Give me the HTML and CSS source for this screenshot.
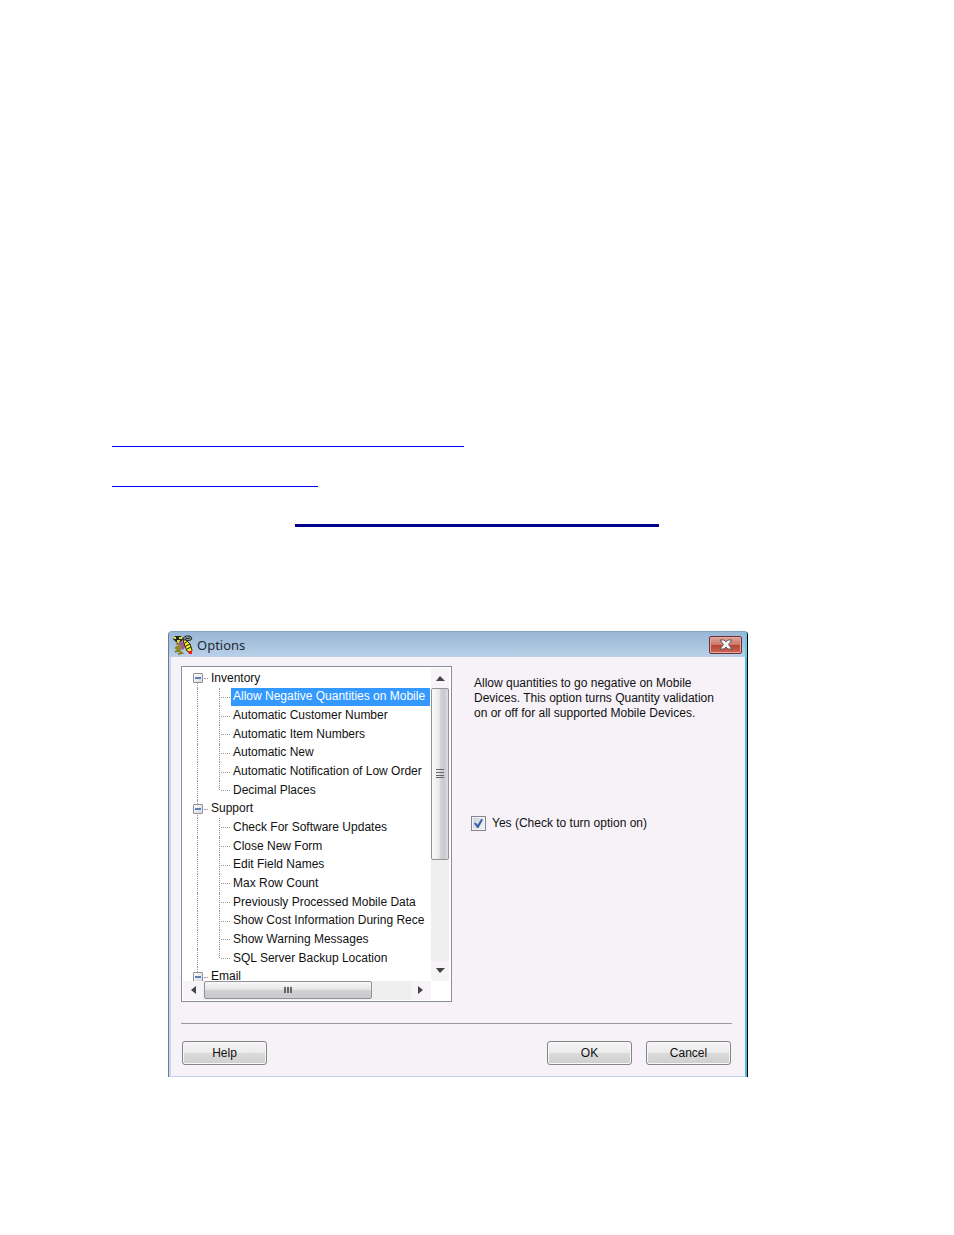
FILE: index.html
```html
<!DOCTYPE html>
<html lang="en">
<head>
<meta charset="utf-8">
<title>Options</title>
<link rel="stylesheet" href="styles.css">
</head>
<body>
<main class="page">
  <nav class="links" aria-label="Related topics">
    <a class="rule-link rule-link-long" href="#options" aria-label="Related topic 1"></a>
    <a class="rule-link rule-link-short" href="#options" aria-label="Related topic 2"></a>
  </nav>
  <hr class="section-rule">
  <section class="dialog" id="options" role="dialog" aria-labelledby="dialog-title">
    <header class="titlebar">
      <svg class="bee" viewBox="0 0 20 20" aria-hidden="true">
        <path d="M10 3l3-2h4l2 2-1 2-5 1-2 2z" fill="#8a9298" stroke="#2a2e2c"/>
        <path d="M12 4l5-1" stroke="#2a2e2c"/>
        <path d="M0 4l2-3h6l2 3-2 3H3z" fill="#23251a"/>
        <path d="M1 3h2M6 3h3M4 6h3" stroke="#e6e23a" stroke-width="2"/>
        <path d="M3 8l4 2-4 3 3 2-4 2M8 13l-2 3 3 2-4 1" stroke="#8b7f20" stroke-width="2"/>
        <path d="M6 6l5 1 2 4-3 4-4-3z" fill="#a55799"/>
        <path d="M5 10h3v4H5z" fill="#9a8c25"/>
        <path d="M10 5h3l4 4 2 6-1 3-4-2-2-5z" fill="#f5ed20" stroke="#27270d"/>
        <path d="M12 8l3-2M13 11l4-2M14 14l4-2" stroke="#20200e"/>
        <path d="M15 16h4v3h-3z" fill="#ef1826"/>
      </svg>
      <h1 class="title" id="dialog-title">Options</h1>
      <button class="close" type="button" aria-label="Close">
        <svg viewBox="0 0 14 11" aria-hidden="true"><path d="M1 1h4l2 2 2-2h4L9.500 5.500 13 10H9L7 8l-2 2H1l3.500-4.500z" fill="#f7f7f7" stroke="#65575b"/></svg>
      </button>
    </header>
    <div class="content">
      <div class="tree-box">
        <div class="tree-view">
          <ul class="tree" role="tree">
            <li class="group first" role="treeitem" aria-expanded="true"><span class="toggle"></span>Inventory</li>
            <li class="item" role="treeitem" aria-selected="true"><span class="label selected">Allow Negative Quantities on Mobile</span></li>
            <li class="item" role="treeitem"><span class="label">Automatic Customer Number</span></li>
            <li class="item" role="treeitem"><span class="label">Automatic Item Numbers</span></li>
            <li class="item" role="treeitem"><span class="label">Automatic New</span></li>
            <li class="item" role="treeitem"><span class="label">Automatic Notification of Low Order</span></li>
            <li class="item last" role="treeitem"><span class="label">Decimal Places</span></li>
            <li class="group" role="treeitem" aria-expanded="true"><span class="toggle"></span>Support</li>
            <li class="item" role="treeitem"><span class="label">Check For Software Updates</span></li>
            <li class="item" role="treeitem"><span class="label">Close New Form</span></li>
            <li class="item" role="treeitem"><span class="label">Edit Field Names</span></li>
            <li class="item" role="treeitem"><span class="label">Max Row Count</span></li>
            <li class="item" role="treeitem"><span class="label">Previously Processed Mobile Data</span></li>
            <li class="item" role="treeitem"><span class="label">Show Cost Information During Rece</span></li>
            <li class="item" role="treeitem"><span class="label">Show Warning Messages</span></li>
            <li class="item last" role="treeitem"><span class="label">SQL Server Backup Location</span></li>
            <li class="group" role="treeitem" aria-expanded="true"><span class="toggle"></span>Email</li>
          </ul>
        </div>
        <div class="scroll scroll-v">
          <button class="arrow" type="button" aria-label="Scroll up"><svg viewBox="0 0 9 9"><path d="M0 7l4-5 5 5z"/></svg></button>
          <div class="track"><div class="thumb"><svg viewBox="0 0 9 9"><path d="M0 0h8v1H0zM0 3h8v1H0zM0 6h8v1H0zM0 8h8v1H0z"/></svg></div></div>
          <button class="arrow" type="button" aria-label="Scroll down"><svg viewBox="0 0 9 9"><path d="M0 1h9L4 6z"/></svg></button>
        </div>
        <div class="scroll scroll-h">
          <button class="arrow" type="button" aria-label="Scroll left"><svg viewBox="0 0 9 9"><path d="M7 0v8L2 4z"/></svg></button>
          <div class="track"><div class="thumb"><svg viewBox="0 0 9 9"><path d="M0 1h2v6H0zM3 1h2v6H3zM6 1h2v6H6z"/></svg></div></div>
          <button class="arrow" type="button" aria-label="Scroll right"><svg viewBox="0 0 9 9"><path d="M1 0v8l5-4z"/></svg></button>
        </div>
      </div>
      <div class="detail">
        <p class="description">Allow quantities to go negative on Mobile<br>Devices. This option turns Quantity validation<br>on or off for all supported Mobile Devices.</p>
        <label class="option" for="allow"><input class="check" id="allow" type="checkbox" checked>Yes (Check to turn option on)</label>
      </div>
    </div>
    <footer class="footer">
      <button class="button" type="button">Help</button>
      <span class="actions">
        <button class="button" type="button">OK</button>
        <button class="button" type="button">Cancel</button>
      </span>
    </footer>
  </section>
</main>
</body>
</html>
```
FILE: styles.css
```css
* { box-sizing: border-box; }
body { margin: 0; background: #fff; color: #111; font: 12px/15px "Liberation Sans", Arial, sans-serif; }
.page { padding: 427px 112px 64px; }
.links { display: flex; flex-direction: column; gap: 20px; }
.rule-link { height: 20px; border-bottom: 1px solid #00f; }
.rule-link-long { width: 352px; }
.rule-link-short { width: 206px; }
.section-rule { width: 364px; height: 3px; margin: 37px auto 0; border: 0; background: #00008b; }

.dialog { width: 580px; max-width: 100%; margin: 104px 0 0 56px; background: #f6f2f7; border: solid; border-width: 1px 1px 0; border-color: #86a3bd #000 #000 #6f7b8e; border-radius: 4px 4px 0 0; box-shadow: inset 2px 0 #c6d9f3, inset -2px 0 #48bfd8, inset 0 -1px #bdd3f2; }
.titlebar { display: flex; align-items: center; height: 25px; padding: 0 5px 0 4px; border-radius: 3px 3px 0 0; background: linear-gradient(#98b6d6, #b9d0e8); box-shadow: inset -2px 0 #61cce0; }
.bee { width: 20px; height: 20px; fill: none; }
.title { flex: 1; margin: 0 4px; font: 13px/20px "Noto Sans", sans-serif; color: #222b35; }
.close { display: flex; align-items: center; justify-content: center; width: 33px; height: 18px; padding: 0; border: 1px solid #6b303b; border-radius: 2px; background: linear-gradient(#dea497, #cc7768 48%, #b64332 50%, #cb6655); box-shadow: inset 0 0 0 1px #e4a89c; }
.close svg { width: 14px; height: 11px; }

.content { display: grid; grid-template-columns: 271px 1fr; margin: 9px 15px 0 12px; padding-bottom: 21px; border-bottom: 1px solid #9c9aa1; }
.tree-box { display: grid; grid-template-columns: 1fr 18px; grid-template-rows: 313px 19px; height: 336px; padding: 1px 2px 1px 1px; border: 1px solid #8b8e9b; background: #fff; }
.tree-view { overflow: hidden; }
.tree { display: grid; grid-template-rows: repeat(17, 1fr); height: 318px; margin: 0; padding: 1px 0 0; list-style: none; white-space: nowrap; }
.group, .item { position: relative; display: flex; align-items: center; min-height: 0; }
.group { padding-left: 10px; }
.item { padding-left: 37px; }
.group::before, .item::before { content: ""; position: absolute; left: 14px; top: 0; bottom: 0; border-left: 1px dotted #999; }
.first::before { top: 50%; }
.item::after { content: ""; position: absolute; left: 36px; top: 0; bottom: 0; border-left: 1px dotted #999; }
.last::after { bottom: 50%; }
.label { display: flex; align-items: center; align-self: stretch; padding-left: 2px; margin-left: 11px; }
.label::before { content: ""; position: absolute; left: 38px; top: 50%; width: 9px; border-top: 1px dotted #999; }
.selected { flex: 1; margin-right: 1px; background: #3399ff; color: #fff; }
.toggle { position: relative; display: flex; align-items: center; justify-content: center; width: 10px; height: 10px; margin-right: 8px; border: 1px solid #909096; border-radius: 1px; background: linear-gradient(135deg, #fff, #d9d9df); }
.toggle::before { content: ""; width: 6px; height: 2px; background: #5f7fc5; }
.toggle::after { content: ""; position: absolute; left: 10px; top: 4px; width: 4px; border-top: 1px dotted #999; }

.scroll { display: flex; background: #f0eff0; }
.scroll-v { flex-direction: column; }
.scroll-h { align-items: stretch; }
.arrow { display: flex; align-items: center; justify-content: center; flex: none; width: 20px; height: 20px; padding: 0; border: 0; background: #f6f4f6; }
.scroll-v .arrow { width: 18px; }
.scroll-h .arrow { height: 19px; }
.arrow svg, .thumb svg { width: 9px; height: 9px; fill: #444; }
.thumb svg { fill: #666; }
.track { flex: 1; }
.thumb { display: flex; align-items: center; justify-content: center; border: 1px solid #929297; border-radius: 2px; }
.scroll-v .thumb { width: 18px; height: 63%; background: linear-gradient(90deg, #fafafa, #e9e9eb 45%, #cfcfd5 55%, #c6c6cc); box-shadow: inset -2px 0 #d9d9de; }
.scroll-h .thumb { width: 81%; height: 18px; margin-left: 1px; background: linear-gradient(#fafafa, #e6e6e8 45%, #cfcfd4 55%, #c9c9ce); }

.detail { padding: 10px 0 0 19px; white-space: nowrap; }
.description { margin: 0 0 0 3px; }
.option { display: flex; align-items: center; gap: 6px; margin-top: 95px; }
.check { appearance: none; display: grid; place-items: center; width: 15px; height: 15px; margin: 0; border: 1px solid #85858c; background: linear-gradient(135deg, #c9d0dc, #f4f5f8); box-shadow: inset 0 0 0 1px #f4f4f7; }
.check:checked::before { content: ""; width: 9px; height: 9px; background: #3f5fa9; clip-path: polygon(0 50%, 20% 40%, 40% 65%, 80% 0, 100% 5%, 50% 100%, 35% 100%); }

.footer { display: flex; justify-content: space-between; padding: 17px 16px 12px 13px; }
.actions { display: flex; gap: 14px; }
.button { width: 85px; height: 24px; padding: 0; border: 1px solid #858589; border-radius: 3px; background: linear-gradient(#f4f4f4, #ebebeb 48%, #dadada 52%, #cfcfcf); box-shadow: inset 0 0 0 1px #f7f7f7; color: #111; font: 12px/15px "Liberation Sans", Arial, sans-serif; }
```
